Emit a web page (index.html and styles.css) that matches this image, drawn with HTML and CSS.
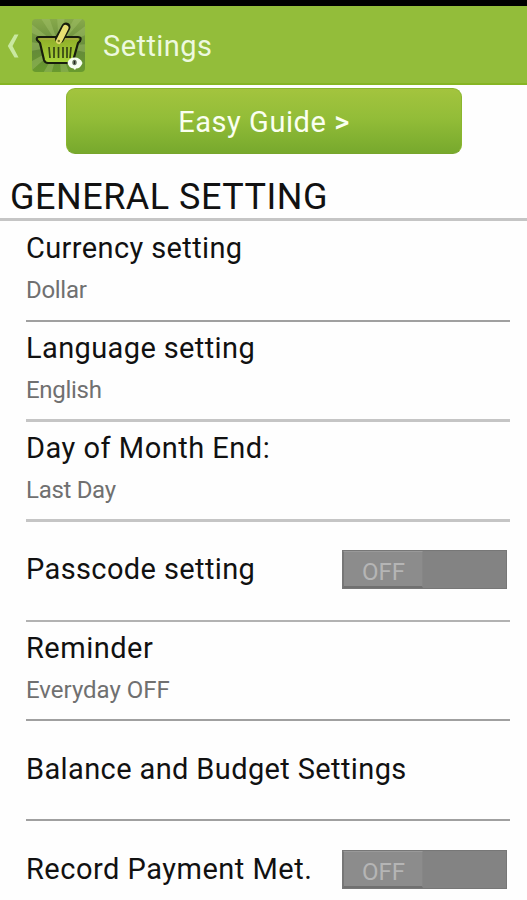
FILE: index.html
```html
<!DOCTYPE html>
<html lang="en">
<head>
<meta charset="utf-8">
<title>Settings</title>
<link rel="stylesheet" href="styles.css">
</head>
<body>
<header class="bar">
  <svg class="back" width="12" height="24" viewBox="0 0 12 24"><path d="M7.500 0.500H11.500L5.500 12L11.500 23.500H7.500L0.800 12Z" fill="#c9e8a0"/></svg>
  <svg class="logo" width="54" height="54" viewBox="0 0 54 54">
    <defs>
      <linearGradient id="bg" x1="0" y1="0" x2="0" y2="1"><stop offset="0" stop-color="#87a94b"/><stop offset=".55" stop-color="#64893a"/><stop offset="1" stop-color="#699b2d"/></linearGradient>
      <linearGradient id="body" x1="0" y1="0" x2="0" y2="1"><stop offset="0" stop-color="#8eac27"/><stop offset="1" stop-color="#a9d43b"/></linearGradient>
      <clipPath id="tile"><rect width="53" height="53" rx="4"/></clipPath>
    </defs>
    <g clip-path="url(#tile)">
      <rect width="54" height="54" fill="url(#bg)"/>
      <path d="M27 27L8-2H17ZM27 27L25-2H33ZM27 27L43-2H52ZM27 27L56 5V15ZM27 27L56 25V34ZM27 27L-2 4V13ZM27 27L-2 23V32ZM27 27L-2 43V53ZM27 27L10 56H19ZM27 27L29 56H38Z" fill="#a7c66d" opacity=".4"/>
    </g>
    <path d="M7 18H46Q50 18 48 22L46 24L41 42Q40 44 38 44H16Q13 44 12 41L8 24L5 21Q4 18 7 18Z" fill="url(#body)" stroke="#171d0c" stroke-width="2.200"/>
    <path d="M8 20H46" stroke="#a4ac3d" stroke-width="2"/>
    <path d="M17 28L18 39M22 28V39M26.500 28V39M31 28V39M35 28V39M39 28L38 39" stroke="#354413" stroke-width="1.700" fill="none"/>
    <path d="M27.500 20L34 8" stroke="#171d0c" stroke-width="9" stroke-linecap="round"/>
    <path d="M27 22L33.500 9" stroke="#e6df72" stroke-width="6" stroke-linecap="round"/>
    <circle cx="26.800" cy="22" r="1.300" fill="#777a24"/>
    <path d="M35.500 44Q37 38.500 42.500 38.500Q48.500 38.500 50.500 44Q48.500 49.500 44 49.500L43 51L41.500 49.500Q37 49 35.500 44Z" fill="#f7fff2"/>
    <ellipse cx="42.500" cy="43.500" rx="2.200" ry="2.800" fill="#63725b"/><path d="M42.500 42V45" stroke="#222"/>
  </svg>
  <h1 class="bar-title">Settings</h1>
</header>
<main>
  <button class="guide">Easy Guide <span class="arrow">&gt;</span></button>
  <h2 class="section">GENERAL SETTING</h2>
  <ul class="list">
    <li class="row first"><div class="label"><span class="name">Currency setting</span><span class="value">Dollar</span></div></li>
    <li class="row soft"><div class="label"><span class="name">Language setting</span><span class="value">English</span></div></li>
    <li class="row soft"><div class="label"><span class="name loose">Day of Month End:</span><span class="value">Last Day</span></div></li>
    <li class="row single passcode"><span class="name">Passcode setting</span><span class="switch"><span class="thumb">OFF</span></span></li>
    <li class="row reminder"><div class="label"><span class="name loose">Reminder</span><span class="value">Everyday OFF</span></div></li>
    <li class="row single"><span class="name">Balance and Budget Settings</span></li>
    <li class="row single"><span class="name loose">Record Payment Met.</span><span class="switch"><span class="thumb">OFF</span></span></li>
  </ul>
</main>
</body>
</html>
```
FILE: styles.css
```css
* { box-sizing: border-box; }
body {
  margin: 0;
  height: 900px;
  overflow: hidden;
  background: #fefefe;
  color: #111;
  font-family: Roboto, "Liberation Sans", sans-serif;
}
h1, h2, ul { margin: 0; padding: 0; font-weight: 400; }
.bar {
  display: flex;
  height: 85px;
  padding: 13px 0 0 7px;
  border-top: 6px solid #000;
  border-bottom: 2px solid #86b524;
  background: #93bd3a;
}
.back { margin-top: 15px; }
.logo { margin-left: 13px; }
.bar-title {
  margin-left: 17px;
  font-size: 29px;
  line-height: 55px;
  letter-spacing: .45px;
  color: #edf9df;
}
.guide {
  display: block;
  width: 396px;
  height: 66px;
  margin: 3px 0 0 66px;
  padding: 1px 0 0;
  border: 1px solid #8ab62e;
  border-bottom-color: #78a52c;
  border-radius: 9px;
  background: linear-gradient(#a3c43e, #93bd38 45%, #77a92d);
  font: 29px/60px Roboto, sans-serif;
  letter-spacing: .55px;
  color: #fafff0;
}
.arrow { font-weight: 500; }
.section {
  height: 67px;
  padding: 22px 0 0 10px;
  border-bottom: 3px solid #c5c5c5;
  font-size: 36px;
  line-height: 43px;
  letter-spacing: .5px;
}
.list { padding: 0 17px 0 26px; list-style: none; }
.row {
  display: flex;
  height: 100px;
  border-bottom: 2px solid #a0a0a0;
}
.row.first { height: 101px; }
.row.soft { border-bottom: 3px solid #c5c5c5; }
.label { display: flex; flex-direction: column; padding-top: 6px; }
.first .label { padding-top: 7px; }
.name { font-size: 29px; line-height: 40px; letter-spacing: .38px; white-space: nowrap; }
.name.loose { letter-spacing: .5px; }
.value {
  margin-top: 1px;
  font-size: 24px;
  line-height: 42px;
  letter-spacing: -.3px;
  color: #707070;
  white-space: nowrap;
}
.single { align-items: center; justify-content: space-between; padding-bottom: 2px; }
.passcode { padding-bottom: 4px; border-bottom-color: #b2b2b2; }
.reminder { height: 99px; }
.reminder .value { letter-spacing: 0; }
.switch {
  width: 165px;
  height: 39px;
  margin: 0 3px 0 0;
  border: 1px solid #777;
  background: #838383;
}
.thumb {
  display: block;
  width: 80px;
  height: 37px;
  padding-left: 1px;
  border: 1px solid #999;
  border-left-color: #777;
  border-right-color: #868686;
  border-bottom: 2px solid #707070;
  background: #8c8c8c;
  color: #b5b5b5;
  font-size: 24px;
  line-height: 41px;
  text-align: center;
}
```
